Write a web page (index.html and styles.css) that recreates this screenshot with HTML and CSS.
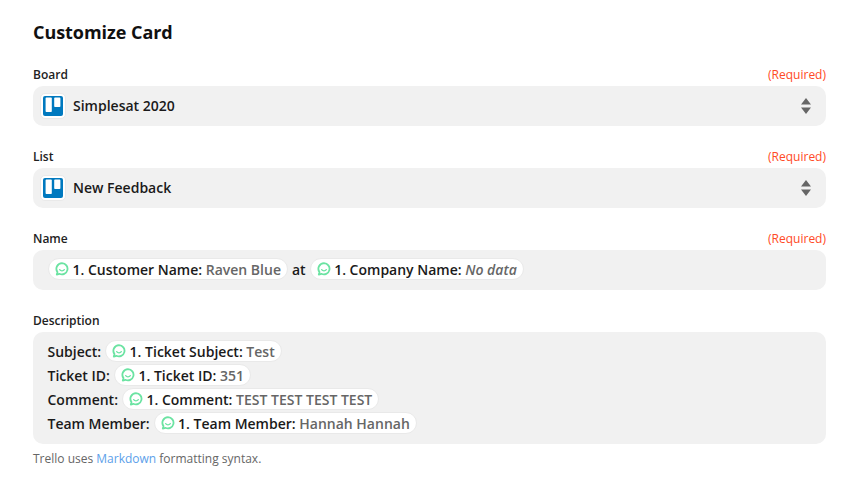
FILE: index.html
```html
<!DOCTYPE html>
<html lang="en">
<head>
<meta charset="utf-8">
<title>Customize Card</title>
<link rel="stylesheet" href="styles.css">
</head>
<body>
<svg width="0" height="0" class="defs" aria-hidden="true">
  <defs>
    <symbol id="chat" viewBox="0 0 14 14">
      <path d="M7 1.2a5.6 5.6 0 1 1-2.6 10.6L1.8 12.6l.7-2.5A5.6 5.6 0 0 1 7 1.2z" fill="none" stroke="#6be3a2" stroke-width="1.8" stroke-linejoin="round"/>
      <path d="M4.7 7.6c.6.9 1.3 1.2 2.3 1.2s1.7-.3 2.3-1.2" fill="none" stroke="#6be3a2" stroke-width="1.3" stroke-linecap="round"/>
    </symbol>
    <symbol id="trello" viewBox="0 0 20 20">
      <rect width="20" height="20" rx="2" fill="#0079bf"/>
      <rect x="2.6" y="1.6" width="6.2" height="14.4" rx="0.8" fill="#fff"/>
      <rect x="11.2" y="1.6" width="6.2" height="9.4" rx="0.8" fill="#fff"/>
    </symbol>
    <symbol id="updown" viewBox="0 0 10 16">
      <path d="M5 0 10 6.6H0z M5 16 0 9.4H10z" fill="#666"/>
    </symbol>
  </defs>
</svg>
<main class="form">
  <h1 class="title">Customize Card</h1>

  <section class="field">
    <div class="label-row"><label class="label">Board</label><span class="required">(Required)</span></div>
    <div class="box select">
      <span class="app-icon"><svg class="trello" width="20" height="20"><use href="#trello"/></svg></span>
      <span class="select-text">Simplesat 2020</span>
      <svg class="updown" width="10" height="16"><use href="#updown"/></svg>
    </div>
  </section>

  <section class="field">
    <div class="label-row"><label class="label">List</label><span class="required">(Required)</span></div>
    <div class="box select">
      <span class="app-icon"><svg class="trello" width="20" height="20"><use href="#trello"/></svg></span>
      <span class="select-text">New Feedback</span>
      <svg class="updown" width="10" height="16"><use href="#updown"/></svg>
    </div>
  </section>

  <section class="field">
    <div class="label-row"><label class="label">Name</label><span class="required">(Required)</span></div>
    <div class="box text">
      <div class="line single">
        <span class="pill"><svg class="chat" width="14" height="14"><use href="#chat"/></svg>1. Customer Name: <span class="val">Raven Blue</span></span>
        <span>at</span>
        <span class="pill"><svg class="chat" width="14" height="14"><use href="#chat"/></svg>1. Company Name: <em class="val">No data</em></span>
      </div>
    </div>
  </section>

  <section class="field">
    <div class="label-row"><label class="label">Description</label></div>
    <div class="box text multi">
      <div class="line"><span>Subject:</span><span class="pill"><svg class="chat" width="14" height="14"><use href="#chat"/></svg>1. Ticket Subject: <span class="val">Test</span></span></div>
      <div class="line"><span>Ticket ID:</span><span class="pill"><svg class="chat" width="14" height="14"><use href="#chat"/></svg>1. Ticket ID: <span class="val">351</span></span></div>
      <div class="line"><span>Comment:</span><span class="pill"><svg class="chat" width="14" height="14"><use href="#chat"/></svg>1. Comment: <span class="val">TEST TEST TEST TEST</span></span></div>
      <div class="line"><span>Team Member:</span><span class="pill"><svg class="chat" width="14" height="14"><use href="#chat"/></svg>1. Team Member: <span class="val">Hannah Hannah</span></span></div>
    </div>
    <p class="help">Trello uses <a href="#" class="link">Markdown</a> formatting syntax.</p>
  </section>
</main>
</body>
</html>
```
FILE: styles.css
```css
* { box-sizing: border-box; }
html, body { margin: 0; padding: 0; background: #fff; }
body {
  font-family: "Open Sans", "Liberation Sans", sans-serif;
  color: #1a1a1a;
  width: 862px;
  height: 481px;
  overflow: hidden;
}
.defs { position: absolute; }
.form {
  padding: 20px 36px 0 33px;
  display: flex;
  flex-direction: column;
}
.title {
  margin: 0 0 21px;
  font-size: 18px;
  line-height: 24px;
  font-weight: 700;
  letter-spacing: -0.05px;
  color: #111;
}
.field { margin-bottom: 21px; }
.label-row {
  display: flex;
  justify-content: space-between;
  align-items: center;
  height: 21px;
  padding-bottom: 3px;
}
.label {
  font-size: 12px;
  font-weight: 600;
  color: #222;
}
.required {
  font-size: 12px;
  color: #ff4a26;
}
.box {
  background: #f1f1f1;
  border-radius: 10px;
  font-size: 14px;
  font-weight: 600;
}
.select {
  height: 40px;
  display: flex;
  align-items: center;
  padding: 0 15px 0 7px;
}
.app-icon {
  width: 26px;
  height: 26px;
  flex: none;
  background: #fff;
  border: 1px solid #e9e9e9;
  border-radius: 5px;
  display: flex;
  align-items: center;
  justify-content: center;
  margin-right: 7px;
}
.select-text { flex: 1; padding-bottom: 2px; }
.text {
  padding: 7px 14.5px 9px;
  min-height: 40px;
}
.line {
  display: flex;
  align-items: center;
  gap: 4px;
  height: 24px;
}
.single { padding-left: 0.5px; }
.pill {
  display: inline-flex;
  align-items: center;
  height: 22px;
  padding: 0 6px;
  background: #fff;
  border: 1px solid #e9e9e9;
  border-radius: 11px;
  white-space: pre;
}
.chat { margin-right: 3.5px; flex: none; }
.val { color: #666; }
.help {
  margin: 8px 0 0;
  font-size: 12px;
  line-height: 14px;
  color: #666;
}
.link { color: #5c9fea; text-decoration: none; }
```
